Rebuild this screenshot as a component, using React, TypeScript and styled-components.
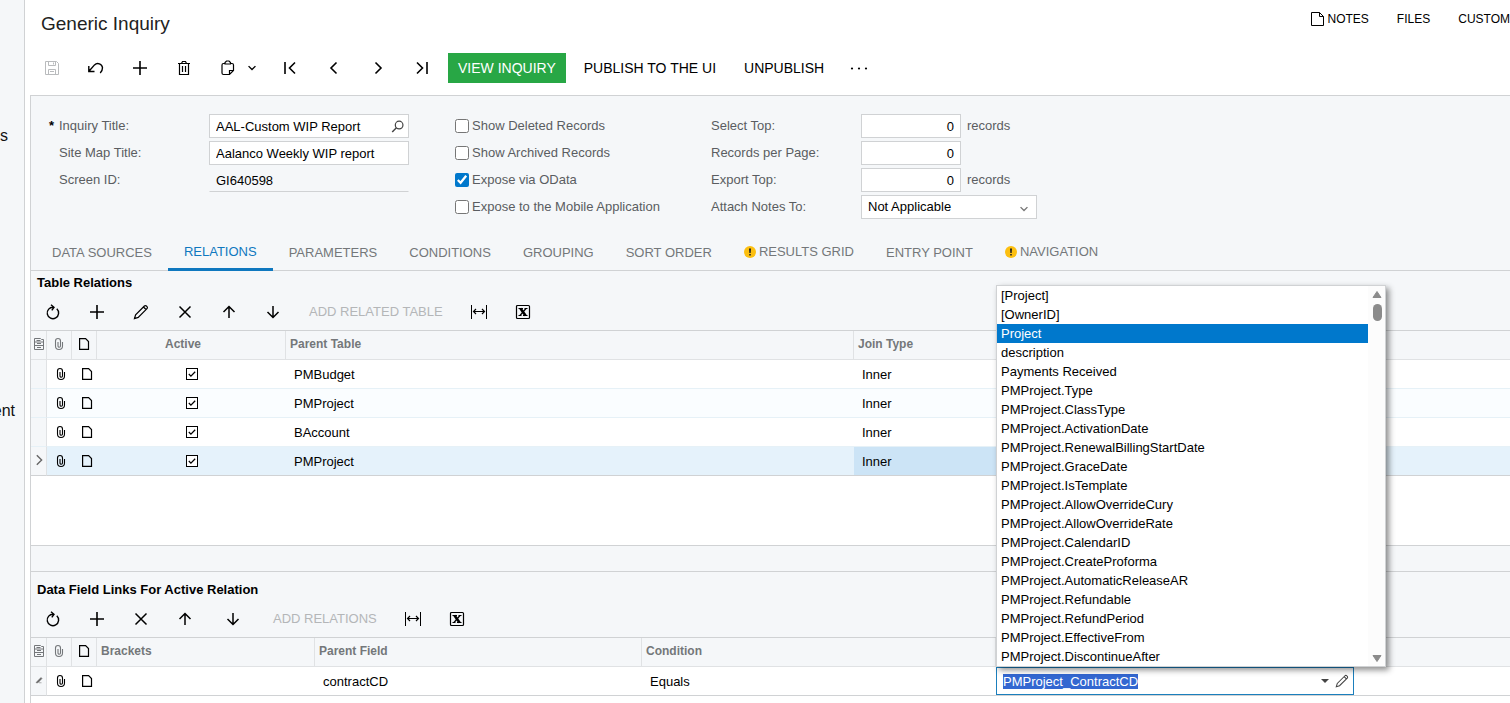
import React, { useEffect, useRef } from "react";
import styled, { createGlobalStyle, css } from "styled-components";

const GlobalStyle = createGlobalStyle`
  * { box-sizing: border-box; }
  body {
    margin: 0;
    background: #fff;
    color: #000;
    font: 13px/16px "Liberation Sans", Arial, sans-serif;
  }
  button, input, select { font: inherit; color: inherit; }
`;

const c = {
  line: "#d0d2d4",
  soft: "#e0e2e4",
  panel: "#f5f7f9",
  label: "#5a5d61",
  muted: "#74777a",
  blue: "#0078cc",
};

const Page = styled.div`
  display: flex;
  min-height: 100vh;
  overflow: hidden;
`;

const Sidebar = styled.nav`
  flex: none;
  width: 25px;
  background: ${c.panel};
  border-right: 1px solid ${c.line};
  padding: 126px 9px 0 0;
  display: flex;
  flex-direction: column;
  align-items: flex-end;
  gap: 255px;
  overflow: hidden;
`;

const SideLink = styled.a<{ $indent?: number }>`
  font-size: 16px;
  line-height: 20px;
  color: #111;
  text-decoration: none;
  padding-right: ${(p) => p.$indent ?? 0}px;
`;

const Main = styled.main`
  flex: 1;
  min-width: 0;
  display: flex;
  flex-direction: column;
`;

const TitleRow = styled.header`
  display: flex;
  justify-content: space-between;
  align-items: flex-start;
  height: 48px;
  padding-left: 16px;
`;

const Title = styled.h1`
  margin: 0;
  font-size: 19px;
  font-weight: 400;
  line-height: 48px;
  color: #222;
`;

const TopLinks = styled.div`
  display: flex;
  gap: 28px;
  height: 38px;
  align-items: center;
`;

const TopLink = styled.button`
  display: flex;
  align-items: center;
  gap: 4px;
  padding: 0;
  border: 0;
  background: none;
  font-size: 12px;
  white-space: nowrap;
`;

const Toolbar = styled.div`
  display: flex;
  align-items: center;
  height: 40px;
  padding-left: 5px;
  margin-bottom: 7px;
`;

const IconButton = styled.button<{ $wide?: boolean; $dim?: boolean; $spaced?: boolean }>`
  flex: none;
  display: flex;
  align-items: center;
  justify-content: center;
  gap: 11px;
  width: 44px;
  height: 30px;
  padding: 0;
  margin: 0 ${(p) => (p.$spaced ? 4 : 0)}px;
  border: 0;
  background: none;
  color: ${(p) => (p.$dim ? "#b9bbbd" : "#000")};
  ${(p) =>
    p.$wide &&
    css`
      width: 62px;
      justify-content: flex-start;
      padding-left: 14px;
    `}
`;

const TextButton = styled.button<{ $primary?: boolean }>`
  height: 30px;
  padding: 0 14px;
  border: 0;
  background: none;
  font-size: 14px;
  white-space: nowrap;
  ${(p) =>
    p.$primary &&
    css`
      padding: 0 10px;
      margin: 0 4px;
      background: #28a745;
      color: #fff;
    `}
`;

const Panel = styled.div`
  flex: 1;
  display: flex;
  flex-direction: column;
  margin-left: 5px;
  border-top: 1px solid ${c.line};
  border-left: 1px solid ${c.line};
  background: ${c.panel};
`;

const Form = styled.form`
  display: flex;
  padding: 18px 0 16px 18px;
`;

const FieldGroup = styled.div<{ $width: number }>`
  flex: none;
  display: flex;
  flex-direction: column;
  gap: 3px;
  width: ${(p) => p.$width}px;
`;

const Field = styled.div<{ $label: number }>`
  display: grid;
  grid-template-columns: ${(p) => p.$label}px auto auto;
  justify-content: start;
  align-items: center;
  height: 24px;
  color: ${c.label};
`;

const Label = styled.label<{ $indent?: boolean }>`
  padding-left: ${(p) => (p.$indent ? 10 : 0)}px;
`;

const Star = styled.span`
  display: inline-block;
  width: 10px;
  color: #000;
  font-weight: 700;
`;

const InputWrap = styled.div<{ $width: number; $plain?: boolean }>`
  display: flex;
  align-items: center;
  width: ${(p) => p.$width}px;
  height: 24px;
  padding-right: 4px;
  background: #fff;
  border: 1px solid ${c.line};
  color: #000;
  ${(p) =>
    p.$plain &&
    css`
      background: none;
      border-color: transparent transparent ${c.line};
    `}
`;

const TextInput = styled.input<{ $right?: boolean }>`
  flex: 1;
  min-width: 0;
  height: 22px;
  padding: 1px 2px 0 6px;
  border: 0;
  outline: 0;
  background: none;
  text-align: ${(p) => (p.$right ? "right" : "left")};
`;

const Select = styled.select`
  flex: 1;
  appearance: none;
  height: 22px;
  padding: 0 6px;
  border: 0;
  background: none;
`;

const InnerButton = styled.button`
  display: flex;
  padding: 0;
  border: 0;
  background: none;
  color: #444;
`;

const SelectMark = styled.span`
  padding: 3px 3px 0 0;
  color: #777;
`;

const Suffix = styled.span`
  padding-left: 6px;
`;

const CheckRow = styled.label`
  display: flex;
  align-items: center;
  gap: 3px;
  height: 24px;
  color: ${c.label};
`;

const Check = styled.input`
  width: 14px;
  height: 14px;
  margin: 0;
  accent-color: ${c.blue};
`;

const Tabs = styled.div`
  display: flex;
  height: 36px;
  padding-left: 5px;
  border-bottom: 1px solid ${c.line};
`;

const Tab = styled.button<{ $active?: boolean; $raised?: boolean }>`
  display: flex;
  align-items: center;
  gap: 3px;
  height: 36px;
  padding: ${(p) => (p.$raised ? 3 : 5)}px 16px 3px;
  border: 0;
  border-bottom: 3px solid ${(p) => (p.$active ? "#0f78bf" : "transparent")};
  background: none;
  color: ${(p) => (p.$active ? "#0f78bf" : c.muted)};
  white-space: nowrap;
`;

const Section = styled.section<{ $second?: boolean }>`
  display: flex;
  flex-direction: column;
  flex: ${(p) => (p.$second ? 1 : "none")};
  padding-top: ${(p) => (p.$second ? 6 : 0)}px;
`;

const SectionTitle = styled.h2`
  margin: 0;
  padding-left: 6px;
  font-size: 13px;
  line-height: 23px;
  font-weight: 700;
`;

const GridToolbar = styled.div`
  display: flex;
  align-items: center;
  height: 36px;
`;

const DimButton = styled.button`
  height: 30px;
  padding: 0 14px;
  border: 0;
  background: none;
  color: #b4b6b8;
  white-space: nowrap;
`;

const GridBody = styled.div<{ $tall?: boolean }>`
  background: #fff;
  border-top: 1px solid ${c.line};
  ${(p) =>
    p.$tall
      ? css`
          height: 216px;
          border-bottom: 1px solid ${c.line};
        `
      : css`
          flex: 1;
        `}
`;

const Splitter = styled.div`
  height: 26px;
  border-bottom: 1px solid ${c.line};
`;

const Table = styled.table`
  width: 100%;
  table-layout: fixed;
  border-collapse: separate;
  border-spacing: 0;
`;

const Th = styled.th<{ $icon?: boolean; $center?: boolean; $last?: boolean }>`
  height: 29px;
  padding: 0 ${(p) => (p.$center ? 16 : 0)}px 2px ${(p) => (p.$icon || p.$center ? 0 : 4)}px;
  background: ${c.panel};
  border-bottom: 1px solid ${c.soft};
  border-right: ${(p) => (p.$last ? "0" : `1px solid ${c.soft}`)};
  color: ${c.muted};
  font-size: 12px;
  text-align: ${(p) => (p.$center ? "center" : "left")};
  vertical-align: middle;
`;

const Tr = styled.tr<{ $tone: "plain" | "alt" | "selected" | "end" }>`
  background: ${(p) =>
    p.$tone === "selected" ? "#e5f2fb" : p.$tone === "alt" ? "#fafdff" : "#fff"};
  & > td {
    border-bottom: 1px solid
      ${(p) => (p.$tone === "selected" || p.$tone === "end" ? c.line : "#e6f1f7")};
  }
`;

const Td = styled.td<{ $kind?: "marker" | "icon" | "check" | "active" | "editor" }>`
  height: 29px;
  padding: 1px 0 0 8px;
  vertical-align: middle;
  ${(p) =>
    p.$kind === "marker" &&
    css`
      && {
        padding: 0 0 2px;
        background: ${c.panel};
        border-right: 1px solid ${c.soft};
        color: #666;
      }
    `}
  ${(p) => p.$kind === "icon" && css`padding: 0 0 0 10px;`}
  ${(p) => p.$kind === "check" && css`padding: 0;`}
  ${(p) => p.$kind === "active" && css`background: #cce4f6;`}
  ${(p) => p.$kind === "editor" && css`padding: 0;`}
`;

const CellButton = styled.button`
  display: flex;
  padding: 0;
  border: 0;
  background: none;
  color: inherit;
`;

const CellIcon = styled.span<{ $dark?: boolean }>`
  display: flex;
  justify-content: center;
  color: ${(p) => (p.$dark ? "#000" : "inherit")};
`;

const CellCheck = styled.input`
  appearance: none;
  display: block;
  width: 12px;
  height: 12px;
  margin: 0 auto;
  border: 1px solid #000;
  background: #fff
    url("data:image/svg+xml,%3Csvg xmlns='http://www.w3.org/2000/svg' viewBox='0 0 11 11'%3E%3Cpath d='M2 5.5 4.3 7.8 9 3' fill='none' stroke='black' stroke-width='1.4'/%3E%3C/svg%3E");
`;

const Editor = styled.div`
  position: relative;
  display: flex;
  align-items: center;
  height: 28px;
  padding-right: 4px;
  background: #fff;
  border: 1px solid #1b7fbd;
`;

const EditorInput = styled.input`
  flex: 1;
  min-width: 0;
  height: 24px;
  padding: 0 6px;
  border: 0;
  outline: 0;
  background: none;
  &::selection {
    background: #3367d1;
    color: #fff;
  }
`;

const EditorButtons = styled.div`
  display: flex;
  align-items: center;
  gap: 6px;
`;

const Menu = styled.div`
  position: absolute;
  left: -1px;
  bottom: 27px;
  z-index: 2;
  display: flex;
  width: 390px;
  background: #fff;
  border: 1px solid ${c.line};
  box-shadow: 3px 3px 6px rgba(0, 0, 0, 0.45);
`;

const Options = styled.ul`
  flex: 1;
  margin: 0;
  padding: 0;
  list-style: none;
`;

const Option = styled.li<{ $on?: boolean }>`
  padding: 0 4px;
  line-height: 19px;
  background: ${(p) => (p.$on ? c.blue : "#fff")};
  color: ${(p) => (p.$on ? "#fff" : "#000")};
`;

const ScrollTrack = styled.div`
  display: flex;
  flex-direction: column;
  align-items: center;
  width: 17px;
  padding: 5px 0 4px 1px;
  background: #fcfcfc;
`;

const Thumb = styled.div`
  width: 9px;
  height: 17px;
  margin: 6px 0 auto;
  border-radius: 5px;
  background: #8b8b8b;
`;

type Shape = { w?: number; h?: number; art: React.ReactNode };

const shapes: Record<string, Shape> = {
  save: {
    art: (
      <>
        <path d="M1.5 1.5h11l2 2v11h-13z" />
        <path d="M4.5 1.500v4h7v-4M9.500 2.500v2M4.500 14.500v-5h7v5" />
        <path d="M6 11.500h4" />
      </>
    ),
  },
  undo: {
    art: <path strokeWidth="1.4" d="M.8 6v5.500h5.700M1.200 11 6.500 4.900a4.700 4.700 0 0 1 8 2.900c0 2-.8 3.800-2.300 5.200" />,
  },
  plus: { art: <path strokeWidth="1.6" d="M8 1v14M1 8h14" /> },
  trash: {
    art: <path strokeWidth="1.200" d="M2 3.500h12M5.500 3.500l1-2h3l1 2M3.500 3.500v11h9v-11M6.500 6v6M9.500 6v6" />,
  },
  clipboard: {
    art: (
      <path
        strokeWidth="1.200"
        d="M5 3.500H3.500a1.500 1.500 0 0 0-1.500 1.500v8A1.500 1.500 0 0 0 3.500 14.500H9.500L13.500 10.500V5A1.500 1.500 0 0 0 12 3.500H10.500M5 4V2.500L6.500 1H9L10.500 2.500V4zM9.500 14.500v-4h4"
      />
    ),
  },
  first: { art: <path strokeWidth="1.600" d="M3 2v12M13 2.500 7.500 8l5.500 5.500" /> },
  prev: { art: <path strokeWidth="1.600" d="M10.500 2.500 5 8l5.500 5.500" /> },
  next: { art: <path strokeWidth="1.600" d="M5.500 2.500 11 8l-5.500 5.500" /> },
  last: { art: <path strokeWidth="1.600" d="M13 2v12M3 2.500 8.500 8 3 13.500" /> },
  more: {
    art: (
      <g fill="currentColor" stroke="none">
        <circle cx="0" cy="8.500" r="1.100" />
        <circle cx="7" cy="8.500" r="1.100" />
        <circle cx="14" cy="8.500" r="1.100" />
      </g>
    ),
  },
  refresh: {
    art: <path strokeWidth="1.400" d="M11.800 4.800A5.700 5.700 0 1 1 8.500 3.300M6 .8 9 3.300 6.800 6.300" />,
  },
  pencil: {
    art: (
      <path
        strokeWidth="1.200"
        d="M1.500 14.500 2.600 10.800 11.400 2a1.400 1.400 0 0 1 2 0l.6.6a1.400 1.400 0 0 1 0 2L5.200 13.400zM10.500 3l2.500 2.500"
      />
    ),
  },
  close: { art: <path strokeWidth="1.500" d="m2.500 2.500 11 11M13.500 2.500l-11 11" /> },
  up: { art: <path strokeWidth="1.500" d="M8 14V2.500M2.500 8 8 2.500 13.500 8" /> },
  down: { art: <path strokeWidth="1.500" d="M8 2v11.500M2.500 8 8 13.500 13.500 8" /> },
  fit: {
    art: (
      <>
        <path d="M.5 1v14M15.500 1v14" />
        <path strokeWidth="1.200" d="M2.500 7.500h11M5 5 2.500 7.500 5 10M11 5l2.500 2.500L11 10" />
      </>
    ),
  },
  excel: {
    art: (
      <>
        <rect x="1.500" y="1.500" width="13" height="13" rx="1" strokeWidth="1.200" />
        <path strokeWidth="2.600" d="m5.500 4.500 5 7" />
        <path strokeWidth="1.200" d="m11 4.500-6 7M3.500 4.500H8M9.500 4.500h3M3.500 11.500h3M8 11.500h4.500" />
      </>
    ),
  },
  note: { w: 13, h: 14, art: <path d="M.5.5h8l4 4v9H.5zM8.500.5v4h4" /> },
  page: { w: 10, h: 12, art: <path strokeWidth="1.200" d="M.6.6h6l2.900 3v7.800H.6z" /> },
  clip: {
    w: 8,
    h: 12,
    art: <path strokeWidth="1.100" d="M7.500 4v4a3.500 3.500 0 0 1-7 0V3a2.500 2.500 0 0 1 5 0v5a1.250 1.250 0 0 1-2.500 0V4" />,
  },
  search: {
    art: (
      <>
        <circle cx="10" cy="6.200" r="4.700" strokeWidth="1.500" />
        <path strokeWidth="1.800" d="M6.700 9.500 1.500 14.700" />
      </>
    ),
  },
  files: {
    w: 10,
    h: 12,
    art: (
      <>
        <path d="M.5 11.500V.5h6l1 1h2v10zM.5 4h9M.5 7.500h9" />
        <path d="M2.500 2.500h4M3 5.500h4M3 9.500h4" />
      </>
    ),
  },
  chevron: { art: <path strokeWidth="2.200" d="m2.500 5 5.500 5.500L13.500 5" /> },
  tip: { art: <path fill="currentColor" d="M2 13.500h4L14 5l-2-2-8 8zM8 13.500h5" /> },
  caret: { art: <path fill="currentColor" stroke="none" d="M0 4h16L8 12z" /> },
};

function Icon({ name, size = 16 }: { name: string; size?: number }) {
  const { w, h, art } = shapes[name];
  return (
    <svg
      width={w ?? size}
      height={h ?? size}
      viewBox={`0 0 ${w ?? 16} ${h ?? 16}`}
      fill="none"
      stroke="currentColor"
      overflow="visible"
      display="block"
      aria-hidden="true"
    >
      {art}
    </svg>
  );
}

function Warning() {
  return (
    <svg width="12" height="12" viewBox="0 0 12 12" aria-hidden="true">
      <circle cx="6" cy="6" r="6" fill="#fcbf10" />
      <path d="M5 2.500h2L6.700 7H5.300zM5.200 8h1.600v1.600H5.200z" fill="#222" />
    </svg>
  );
}

function Arrow({ up }: { up?: boolean }) {
  return (
    <svg width="10" height="7" viewBox="0 0 10 7" aria-hidden="true">
      <path
        d={up ? "M5 .5 9 6.500H1z" : "M5 6.500 9 .5H1z"}
        fill="#8b8b8b"
        stroke="#8b8b8b"
        strokeLinejoin="round"
      />
    </svg>
  );
}

const tabs = [
  { name: "DATA SOURCES" },
  { name: "RELATIONS", active: true },
  { name: "PARAMETERS" },
  { name: "CONDITIONS" },
  { name: "GROUPING" },
  { name: "SORT ORDER" },
  { name: "RESULTS GRID", warn: true },
  { name: "ENTRY POINT" },
  { name: "NAVIGATION", warn: true },
];

const checks = [
  { name: "Show Deleted Records" },
  { name: "Show Archived Records" },
  { name: "Expose via OData", on: true },
  { name: "Expose to the Mobile Application" },
];

const numbers = [
  { id: "select-top", name: "Select Top:", suffix: "records" },
  { id: "per-page", name: "Records per Page:" },
  { id: "export-top", name: "Export Top:", suffix: "records" },
];

const relations = ["PMBudget", "PMProject", "BAccount", "PMProject"];

const options = [
  "[Project]",
  "[OwnerID]",
  "Project",
  "description",
  "Payments Received",
  "PMProject.Type",
  "PMProject.ClassType",
  "PMProject.ActivationDate",
  "PMProject.RenewalBillingStartDate",
  "PMProject.GraceDate",
  "PMProject.IsTemplate",
  "PMProject.AllowOverrideCury",
  "PMProject.AllowOverrideRate",
  "PMProject.CalendarID",
  "PMProject.CreateProforma",
  "PMProject.AutomaticReleaseAR",
  "PMProject.Refundable",
  "PMProject.RefundPeriod",
  "PMProject.EffectiveFrom",
  "PMProject.DiscontinueAfter",
];

function Columns({ widths }: { widths: number[] }) {
  return (
    <colgroup>
      {widths.map((w, i) => (
        <col key={i} width={w} />
      ))}
      <col />
    </colgroup>
  );
}

function LeadHeaders() {
  return (
    <>
      <Th $icon><CellIcon><Icon name="files" /></CellIcon></Th>
      <Th $icon><CellIcon><Icon name="clip" /></CellIcon></Th>
      <Th $icon><CellIcon $dark><Icon name="page" /></CellIcon></Th>
    </>
  );
}

function LeadCells({ marker }: { marker?: React.ReactNode }) {
  return (
    <>
      <Td $kind="marker">{marker && <CellIcon>{marker}</CellIcon>}</Td>
      <Td $kind="icon">
        <CellButton type="button" aria-label="Attach file"><Icon name="clip" /></CellButton>
      </Td>
      <Td $kind="icon">
        <CellButton type="button" aria-label="Row note"><Icon name="page" /></CellButton>
      </Td>
    </>
  );
}

function GridButton({ icon, label, spaced }: { icon: string; label: string; spaced?: boolean }) {
  return (
    <IconButton type="button" aria-label={label} $spaced={spaced}>
      <Icon name={icon} />
    </IconButton>
  );
}

export default function App() {
  const editor = useRef<HTMLInputElement>(null);
  useEffect(() => {
    editor.current?.focus({ preventScroll: true });
    editor.current?.select();
  }, []);

  return (
    <Page>
      <GlobalStyle />
      <Sidebar>
        <SideLink href="#" $indent={7}>s</SideLink>
        <SideLink href="#">ent</SideLink>
      </Sidebar>
      <Main>
        <TitleRow>
          <Title>Generic Inquiry</Title>
          <TopLinks>
            <TopLink type="button"><Icon name="note" />NOTES</TopLink>
            <TopLink type="button">FILES</TopLink>
            <TopLink type="button">CUSTOM</TopLink>
          </TopLinks>
        </TitleRow>
        <Toolbar>
          <IconButton type="button" aria-label="Save" $dim><Icon name="save" /></IconButton>
          <IconButton type="button" aria-label="Undo"><Icon name="undo" /></IconButton>
          <IconButton type="button" aria-label="Add"><Icon name="plus" /></IconButton>
          <IconButton type="button" aria-label="Delete"><Icon name="trash" /></IconButton>
          <IconButton type="button" aria-label="Copy and paste" $wide>
            <Icon name="clipboard" />
            <Icon name="chevron" size={10} />
          </IconButton>
          <IconButton type="button" aria-label="First"><Icon name="first" /></IconButton>
          <IconButton type="button" aria-label="Previous"><Icon name="prev" /></IconButton>
          <IconButton type="button" aria-label="Next"><Icon name="next" /></IconButton>
          <IconButton type="button" aria-label="Last"><Icon name="last" /></IconButton>
          <TextButton type="button" $primary>VIEW INQUIRY</TextButton>
          <TextButton type="button">PUBLISH TO THE UI</TextButton>
          <TextButton type="button">UNPUBLISH</TextButton>
          <IconButton type="button" aria-label="More"><Icon name="more" /></IconButton>
        </Toolbar>
        <Panel>
          <Form onSubmit={(e) => e.preventDefault()}>
            <FieldGroup $width={406}>
              <Field $label={160}>
                <Label htmlFor="title"><Star>*</Star>Inquiry Title:</Label>
                <InputWrap $width={200}>
                  <TextInput id="title" defaultValue="AAL-Custom WIP Report" />
                  <InnerButton type="button" aria-label="Look up"><Icon name="search" size={13} /></InnerButton>
                </InputWrap>
              </Field>
              <Field $label={160}>
                <Label htmlFor="map" $indent>Site Map Title:</Label>
                <InputWrap $width={200}><TextInput id="map" defaultValue="Aalanco Weekly WIP report" /></InputWrap>
              </Field>
              <Field $label={160}>
                <Label htmlFor="screen" $indent>Screen ID:</Label>
                <InputWrap $width={200} $plain><TextInput id="screen" readOnly value="GI640598" /></InputWrap>
              </Field>
            </FieldGroup>
            <FieldGroup $width={256}>
              {checks.map((k) => (
                <CheckRow key={k.name}>
                  <Check type="checkbox" defaultChecked={k.on} />
                  {k.name}
                </CheckRow>
              ))}
            </FieldGroup>
            <FieldGroup $width={326}>
              {numbers.map((n) => (
                <Field $label={150} key={n.id}>
                  <Label htmlFor={n.id}>{n.name}</Label>
                  <InputWrap $width={100}><TextInput id={n.id} defaultValue="0" $right /></InputWrap>
                  {n.suffix && <Suffix>{n.suffix}</Suffix>}
                </Field>
              ))}
              <Field $label={150}>
                <Label htmlFor="notes-to">Attach Notes To:</Label>
                <InputWrap $width={176}>
                  <Select id="notes-to"><option>Not Applicable</option></Select>
                  <SelectMark><Icon name="chevron" size={10} /></SelectMark>
                </InputWrap>
              </Field>
            </FieldGroup>
          </Form>
          <Tabs role="tablist">
            {tabs.map((t) => (
              <Tab
                type="button"
                role="tab"
                key={t.name}
                $active={t.active}
                $raised={t.active || t.warn}
                aria-selected={!!t.active}
              >
                {t.warn && <Warning />}
                {t.name}
              </Tab>
            ))}
          </Tabs>
          <Section>
            <SectionTitle>Table Relations</SectionTitle>
            <GridToolbar>
              <GridButton icon="refresh" label="Refresh" />
              <GridButton icon="plus" label="Add row" />
              <GridButton icon="pencil" label="Edit" />
              <GridButton icon="close" label="Delete row" />
              <GridButton icon="up" label="Move up" />
              <GridButton icon="down" label="Move down" />
              <DimButton type="button">ADD RELATED TABLE</DimButton>
              <GridButton icon="fit" label="Fit to screen" />
              <GridButton icon="excel" label="Export to Excel" />
            </GridToolbar>
            <GridBody $tall>
              <Table>
                <Columns widths={[16, 25, 25, 189, 568, 250]} />
                <thead>
                  <tr>
                    <LeadHeaders />
                    <Th $center>Active</Th>
                    <Th>Parent Table</Th>
                    <Th>Join Type</Th>
                    <Th $last />
                  </tr>
                </thead>
                <tbody>
                  {relations.map((name, i) => {
                    const on = i === relations.length - 1;
                    return (
                      <Tr key={i} $tone={on ? "selected" : i % 2 ? "alt" : "plain"}>
                        <LeadCells marker={on && <Icon name="next" size={14} />} />
                        <Td $kind="check"><CellCheck type="checkbox" defaultChecked aria-label="Active" /></Td>
                        <Td>{name}</Td>
                        <Td $kind={on ? "active" : undefined}>Inner</Td>
                        <Td />
                      </Tr>
                    );
                  })}
                </tbody>
              </Table>
            </GridBody>
            <Splitter />
          </Section>
          <Section $second>
            <SectionTitle>Data Field Links For Active Relation</SectionTitle>
            <GridToolbar>
              <GridButton icon="refresh" label="Refresh" />
              <GridButton icon="plus" label="Add row" />
              <GridButton icon="close" label="Delete row" />
              <GridButton icon="up" label="Move up" />
              <GridButton icon="down" label="Move down" spaced />
              <DimButton type="button">ADD RELATIONS</DimButton>
              <GridButton icon="fit" label="Fit to screen" />
              <GridButton icon="excel" label="Export to Excel" />
            </GridToolbar>
            <GridBody>
              <Table>
                <Columns widths={[16, 25, 25, 218, 327, 354, 358]} />
                <thead>
                  <tr>
                    <LeadHeaders />
                    <Th>Brackets</Th>
                    <Th>Parent Field</Th>
                    <Th>Condition</Th>
                    <Th $last />
                    <Th $last />
                  </tr>
                </thead>
                <tbody>
                  <Tr $tone="end">
                    <LeadCells marker={<Icon name="tip" size={8} />} />
                    <Td />
                    <Td>contractCD</Td>
                    <Td>Equals</Td>
                    <Td $kind="editor">
                      <Editor>
                        <EditorInput ref={editor} aria-label="Child field" defaultValue="PMProject_ContractCD" />
                        <EditorButtons>
                          <InnerButton type="button" aria-label="Open list"><Icon name="caret" size={8} /></InnerButton>
                          <InnerButton type="button" aria-label="Edit field"><Icon name="pencil" size={14} /></InnerButton>
                        </EditorButtons>
                        <Menu>
                          <Options role="listbox">
                            {options.map((o) => (
                              <Option key={o} role="option" aria-selected={o === "Project"} $on={o === "Project"}>
                                {o}
                              </Option>
                            ))}
                          </Options>
                          <ScrollTrack>
                            <Arrow up />
                            <Thumb />
                            <Arrow />
                          </ScrollTrack>
                        </Menu>
                      </Editor>
                    </Td>
                    <Td />
                  </Tr>
                </tbody>
              </Table>
            </GridBody>
          </Section>
        </Panel>
      </Main>
    </Page>
  );
}
